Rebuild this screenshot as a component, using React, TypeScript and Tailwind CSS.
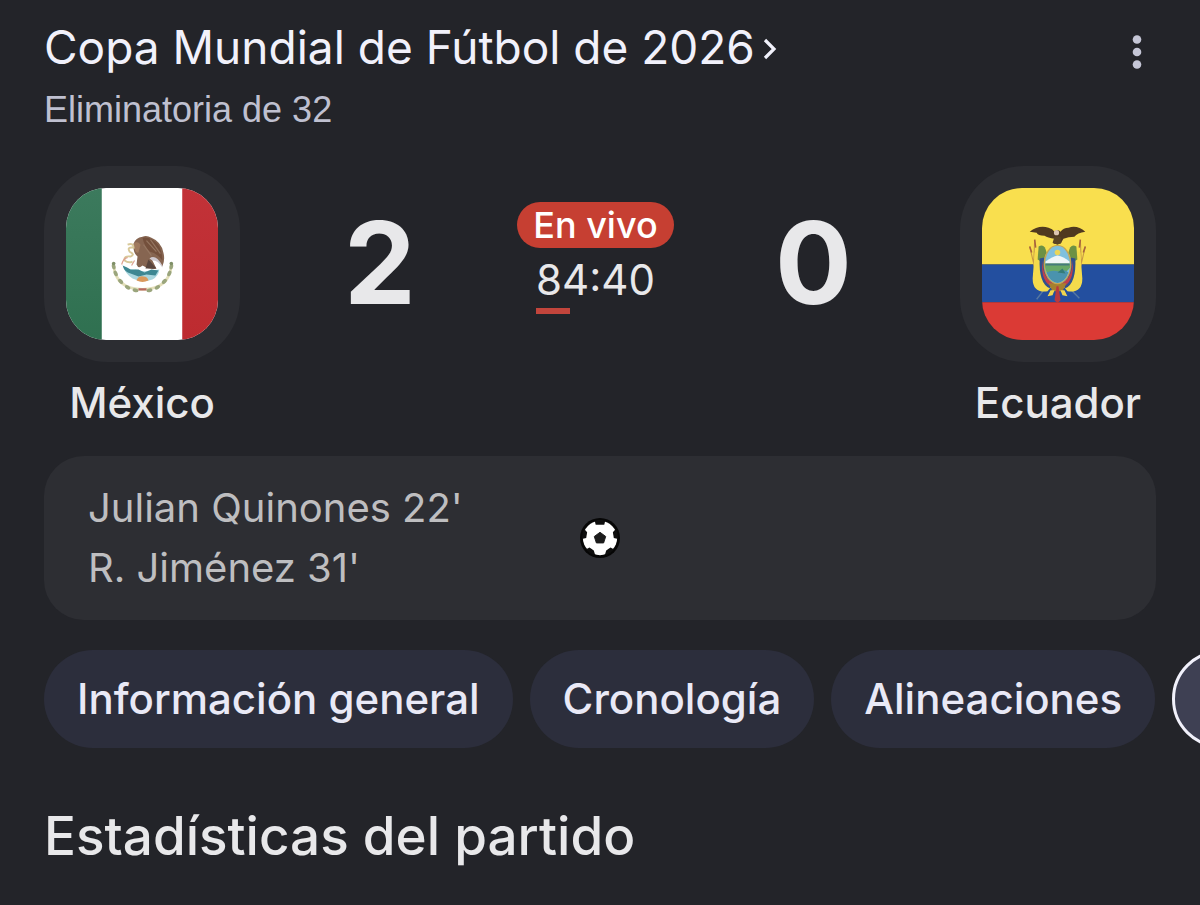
import type { ReactNode } from "react"

const goals = ["Julian Quinones 22'", "R. Jiménez 31'"]

const tabs = ["Información general", "Cronología", "Alineaciones"]

function MexicoFlag() {
  const leaves = [
    [-29, 2, 80],
    [-27, 9, 65],
    [-22, 17, 45],
    [-15, 23, 30],
    [-7, 26, 12],
    [7, 26, -12],
    [15, 23, -30],
    [22, 17, -45],
    [27, 9, -65],
    [29, 2, -80],
  ]

  return (
    <svg viewBox="0 0 153 153" className="w-full h-full" aria-hidden="true">
      <defs>
        <linearGradient id="mxGreen" x1="0" y1="0" x2="0" y2="1">
          <stop offset="0" stopColor="#3c7a5d" />
          <stop offset="1" stopColor="#2f7050" />
        </linearGradient>
        <linearGradient id="mxRed" x1="0" y1="0" x2="0" y2="1">
          <stop offset="0" stopColor="#c23238" />
          <stop offset="1" stopColor="#bd2b30" />
        </linearGradient>
      </defs>
      <rect width="153" height="153" fill="#fff" />
      <rect width="36" height="153" fill="url(#mxGreen)" />
      <rect x="117" width="36" height="153" fill="url(#mxRed)" />
      <g transform="translate(77 77)">
        <path d="M-29 1 Q-27 25 0 25 Q27 25 29 1" fill="none" stroke="#e3dfba" strokeWidth="2.8" />
        {leaves.map(([x, y, r]) => (
          <ellipse key={`${x}-${y}`} cx={x} cy={y} rx="3" ry="1.9" fill="#9aa57c" transform={`rotate(${r} ${x} ${y})`} />
        ))}
        <circle cx="-29" cy="-1" r="1.8" fill="#7f9068" />
        <circle cx="29" cy="-1" r="1.8" fill="#7f9068" />
        {/* lake and island */}
        <path d="M-20 1 Q-14 6 -7 5 Q0 8 8 6 L17 5 Q16 12 10 15 Q0 19 -10 14 Q-17 10 -20 1Z" fill="#a9d6de" />
        <path d="M-20 1 Q-15 3 -12 5 L-4 5 L2 8 L9 5 L16 6 L13 11 L4 10 L-4 12 L-12 9 Q-18 8 -20 1Z" fill="#3d8792" />
        <path d="M-6 16 Q-4 11 1 12 Q5 12 6 16 Q0 19 -6 16Z" fill="#d9995c" />
        <path d="M-4 25 h8" stroke="#b7685f" strokeWidth="2.4" />
        {/* eagle */}
        <path d="M-9 -21 Q-7 -27 0 -28 Q4 -30 9 -27 Q19 -23 21 -12 Q23 -5 20 2 Q14 -8 9 -6 L14 4 Q7 6 0 1 Q-4 5 -6 0 L-5 -8 Q-10 -12 -9 -21Z" fill="#866551" />
        <path d="M0 -27 Q10 -28 17 -18 Q20 -11 20 -4 Q14 -12 7 -13 Q2 -18 0 -27Z" fill="#74503c" />
        <path d="M7 -6 Q13 -11 20 1 L20 3 Q15 -5 10 -4Z" fill="#cfc9cf" />
        <path d="M4 -24 L14 -13 M8 -25 L18 -11 M1 -20 L9 -9" stroke="#947560" strokeWidth="1.2" />
        <path d="M6 -5 L14 4 L3 4Z" fill="#59453d" />
        <path d="M-9 -21 Q-5 -24 -2 -20 L-4 -12 Q-8 -11 -9 -21Z" fill="#a07a5e" />
        {/* snake */}
        <path d="M-15 -20 Q-9 -22 -9 -17 Q-16 -18 -13 -13 Q-7 -10 -12 -8 Q-19 -9 -18 -4 Q-14 -1 -10 -3" fill="none" stroke="#d8c99a" strokeWidth="2" />
        <path d="M-21 0 Q-19 -7 -15 -7 M-11 1 L-8 -4" fill="none" stroke="#dda08f" strokeWidth="1.2" />
      </g>
    </svg>
  )
}

function EcuadorFlag() {
  return (
    <svg viewBox="0 0 153 153" className="w-full h-full" aria-hidden="true">
      <rect width="153" height="77" fill="#f9df4e" />
      <rect y="77" width="153" height="38" fill="#234f9f" />
      <rect y="115" width="153" height="38" fill="#db3a35" />
      <g transform="translate(76 77)">
        {/* spears behind the shield */}
        <path d="M-28 -18 L-18 24 M-23 -25 L-24 0 M28 -18 L18 24 M23 -25 L24 0" stroke="#c79a45" strokeWidth="1.1" />
        <path d="M-28 -18 l2 6 M28 -18 l-2 6 M-23 -25 l1 8 M23 -25 l-1 8" stroke="#a8643c" strokeWidth="1.6" />
        <path d="M-14 26 L-21 35 M14 26 L22 34" stroke="#5577a0" strokeWidth="1.4" />
        {/* flags draped on both sides */}
        <path d="M-23 -12 Q-15 -16 -13 -4 L-14 10 Q-14 20 -6 22 L-10 27 Q-25 29 -25 14 Z" fill="#f4db4c" />
        <path d="M23 -12 Q15 -16 13 -4 L14 10 Q14 20 6 22 L10 27 Q25 29 25 14 Z" fill="#f4db4c" />
        <path d="M-19 -18 Q-13 -22 -11 -12 L-15 -2 L-20 -5Z" fill="#6d9144" />
        <path d="M19 -18 Q13 -22 11 -12 L15 -2 L20 -5Z" fill="#6d9144" />
        <path d="M-18 -6 L-13 -7 Q-14 14 -5 20 L-8 24 Q-19 19 -18 -6Z" fill="#31508d" />
        <path d="M18 -6 L13 -7 Q14 14 5 20 L8 24 Q19 19 18 -6Z" fill="#31508d" />
        <path d="M-15 -4 Q-15 14 -4 19 L-3 24 Q-18 18 -15 -4Z" fill="#c13f4a" />
        <path d="M15 -4 Q15 14 4 19 L3 24 Q18 18 15 -4Z" fill="#c13f4a" />
        <path d="M-9 19 H9 L5 27 H-5Z" fill="#a6802f" />
        <path d="M-7 26 L-10 32 L-5 31 L-3 26Z M7 26 L10 32 L5 31 L3 26Z" fill="#f0d650" />
        <path d="M-1 22 L-3 36 L0 39 L3 36 L1 22Z" fill="#b73940" />
        {/* oval shield */}
        <ellipse cx="0" cy="0" rx="14" ry="20" fill="#c6a552" />
        <ellipse cx="0" cy="0" rx="12.6" ry="18.6" fill="#7fc0de" />
        <circle cx="0" cy="-12" r="2.8" fill="#e9d65a" />
        <path d="M-12 -3 Q-5 -8 0 -9 Q6 -8 12 -3 L12 0 H-12Z" fill="#eef5f8" />
        <path d="M-12.6 -1 H12.6 V3 Q8 11 -9 11 Q-13 6 -12.6 -1Z" fill="#68a866" />
        <path d="M-12 -1 H12 V1 H-12Z" fill="#457b7b" />
        <path d="M-11 8 Q-5 5 1 7 Q7 4 11 8 Q8 17 0 18.6 Q-8 17 -11 8Z" fill="#4a93ae" />
        <path d="M0 8 L5 4 L8 9Z" fill="#347c78" />
        {/* condor */}
        <path d="M-28 -33 Q-19 -40 -9 -37 Q-5 -36 -3 -33 Q0 -36 3 -33 Q6 -37 11 -37 Q20 -40 28 -33 Q20 -32 17 -28 Q11 -28 6 -26 L3 -21 L-4 -21 L-3 -26 Q-10 -27 -13 -29 Q-20 -29 -21 -32Z" fill="#50391f" />
        <path d="M-5 -22 L-3 -28 L3 -28 L4 -22 L0 -20Z" fill="#5a4425" />
        <circle cx="-1" cy="-32" r="2.6" fill="#ddc5b0" />
      </g>
    </svg>
  )
}

function BallIcon() {
  return (
    <svg viewBox="0 0 42 42" className="w-10 h-10" role="img" aria-label="Goles">
      <defs>
        <clipPath id="ball">
          <circle cx="21" cy="21" r="19" />
        </clipPath>
      </defs>
      <circle cx="21" cy="21" r="21" fill="#060606" />
      <circle cx="21" cy="21" r="18" fill="#fff" />
      <g clipPath="url(#ball)" fill="#0e0e0e">
        <path d="M21 15 L27 19.4 L24.8 26.2 H17.2 L15 19.4Z" fill="#1c1c1c" stroke="#1c1c1c" strokeLinejoin="round" />
        <path d="M15 1 H27 L25.5 7 H16.5Z" />
        <path d="M41 12 L40 22 L35.5 21 L34.5 15 L38 11Z" />
        <path d="M1 12 L2 22 L6.5 21 L7.5 15 L4 11Z" />
        <path d="M26 39 L27.5 34 L32 31 L36 33 L31 40Z" />
        <path d="M16 39 L14.5 34 L10 31 L6 33 L11 40Z" />
      </g>
    </svg>
  )
}

function Team({ name, children }: { name: string; children: ReactNode }) {
  return (
    <div className="flex flex-col items-center w-49">
      <div className="w-49 h-49 p-[22px] rounded-[64px] bg-[#2c2d32]">
        <div className="w-full h-full rounded-[40px] overflow-hidden">{children}</div>
      </div>
      <p className="mt-4 text-[42px] leading-[50px] font-medium">{name}</p>
    </div>
  )
}

export default function App() {
  return (
    <main className="min-h-screen px-11 pt-5 pb-8 overflow-hidden bg-[#232429] text-[#e8e8ea] font-['Inter',sans-serif]">
      <header className="flex justify-between items-start">
        <div>
          <h1 className="text-[46px] leading-[54px] text-[#f1f1fb]">
            <a href="#torneo" className="flex items-center gap-2">
              Copa Mundial de Fútbol de 2026
              <svg viewBox="0 0 14 24" className="w-3.5 h-6 mt-1" fill="none" stroke="currentColor" strokeWidth="3.2" aria-hidden="true">
                <path d="M2 3 L11 12 L2 21" />
              </svg>
            </a>
          </h1>
          <p className="mt-3 text-[36px] leading-[48px] text-[#bfc0d0] font-['Liberation_Sans',sans-serif]">Eliminatoria de 32</p>
        </div>
        <button type="button" aria-label="Más opciones" className="mt-3 mr-3">
          <svg viewBox="0 0 14 40" className="w-3.5 h-10" fill="#c5c6d6">
            <circle cx="7" cy="7.5" r="4.3" />
            <circle cx="7" cy="20" r="4.3" />
            <circle cx="7" cy="32.5" r="4.3" />
          </svg>
        </button>
      </header>

      <section className="flex items-start mt-8">
        <Team name="México">
          <MexicoFlag />
        </Team>
        <div className="flex-1 flex items-start justify-between pl-[104px] pr-[108px] pt-8">
          <span className="text-[114px] leading-[130px] font-bold">2</span>
          <div className="flex flex-col items-center pt-1">
            <span className="rounded-full bg-[#c63f32] px-4 text-[36px] leading-[46px] font-medium text-white">En vivo</span>
            <div className="mt-1">
              <span className="block text-[42px] leading-[56px]">84:40</span>
              <span className="block w-[34px] h-[6px] bg-[#c2453c]" />
            </div>
          </div>
          <span className="text-[114px] leading-[130px] font-bold">0</span>
        </div>
        <Team name="Ecuador">
          <EcuadorFlag />
        </Team>
      </section>

      <section className="grid grid-cols-[1fr_auto_1fr] items-center mt-7 px-11 py-[22px] rounded-[40px] bg-[#2d2e33]">
        <ul className="text-[40px] leading-[60px] text-[#bebec0]">
          {goals.map((goal) => (
            <li key={goal}>{goal}</li>
          ))}
        </ul>
        <BallIcon />
      </section>

      <nav className="flex gap-[17px] mt-[30px] -mr-11 overflow-hidden">
        {tabs.map((tab) => (
          <button
            key={tab}
            type="button"
            className="shrink-0 rounded-full bg-[#2c2e3c] px-[33px] py-6 text-[42px] leading-[50px] font-medium text-[#e9e9f6]"
          >
            {tab}
          </button>
        ))}
        <button
          type="button"
          aria-label="Estadísticas"
          className="shrink-0 w-80 rounded-full border-3 border-[#f1f1fb] bg-[#3e4053]"
        />
      </nav>

      <h2 className="mt-14 text-[53px] leading-[64px] font-medium">Estadísticas del partido</h2>
    </main>
  )
}
